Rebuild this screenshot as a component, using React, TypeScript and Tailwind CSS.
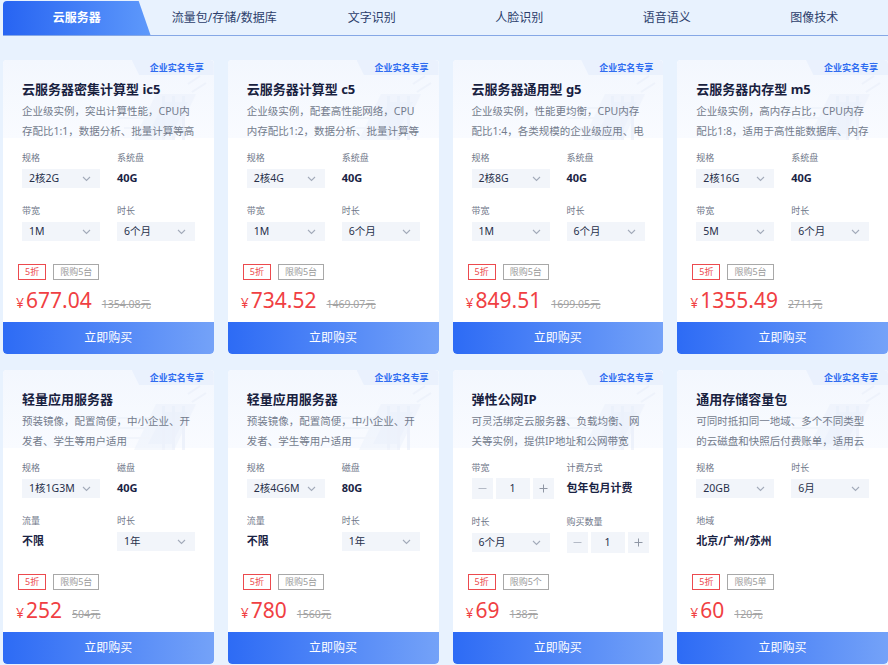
type Field =
  | { label: string; kind: 'select'; value: string }
  | { label: string; kind: 'text'; value: string }
  | { label: string; kind: 'stepper'; value: string };

type Card = {
  title: string;
  desc: string;
  fields: Field[];
  limit: string;
  price: string;
  orig: string;
};

const tabs = ['云服务器', '流量包/存储/数据库', '文字识别', '人脸识别', '语音语义', '图像技术'];

const cvmFields = (spec: string, bw: string): Field[] => [
  { label: '规格', kind: 'select', value: spec },
  { label: '系统盘', kind: 'text', value: '40G' },
  { label: '带宽', kind: 'select', value: bw },
  { label: '时长', kind: 'select', value: '6个月' },
];

// descriptions are cut to what fits in two lines
const cards: Card[] = [
  {
    title: '云服务器密集计算型 ic5',
    desc: '企业级实例，突出计算性能，CPU内存配比1:1，数据分析、批量计算等高',
    fields: cvmFields('2核2G', '1M'),
    limit: '限购5台',
    price: '677.04',
    orig: '1354.08元',
  },
  {
    title: '云服务器计算型 c5',
    desc: '企业级实例，配套高性能网络，CPU内存配比1:2，数据分析、批量计算等',
    fields: cvmFields('2核4G', '1M'),
    limit: '限购5台',
    price: '734.52',
    orig: '1469.07元',
  },
  {
    title: '云服务器通用型 g5',
    desc: '企业级实例，性能更均衡，CPU内存配比1:4，各类规模的企业级应用、电',
    fields: cvmFields('2核8G', '1M'),
    limit: '限购5台',
    price: '849.51',
    orig: '1699.05元',
  },
  {
    title: '云服务器内存型 m5',
    desc: '企业级实例，高内存占比，CPU内存配比1:8，适用于高性能数据库、内存',
    fields: cvmFields('2核16G', '5M'),
    limit: '限购5台',
    price: '1355.49',
    orig: '2711元',
  },
  {
    title: '轻量应用服务器',
    desc: '预装镜像，配置简便，中小企业、开发者、学生等用户适用',
    fields: [
      { label: '规格', kind: 'select', value: '1核1G3M' },
      { label: '磁盘', kind: 'text', value: '40G' },
      { label: '流量', kind: 'text', value: '不限' },
      { label: '时长', kind: 'select', value: '1年' },
    ],
    limit: '限购5台',
    price: '252',
    orig: '504元',
  },
  {
    title: '轻量应用服务器',
    desc: '预装镜像，配置简便，中小企业、开发者、学生等用户适用',
    fields: [
      { label: '规格', kind: 'select', value: '2核4G6M' },
      { label: '磁盘', kind: 'text', value: '80G' },
      { label: '流量', kind: 'text', value: '不限' },
      { label: '时长', kind: 'select', value: '1年' },
    ],
    limit: '限购5台',
    price: '780',
    orig: '1560元',
  },
  {
    title: '弹性公网IP',
    desc: '可灵活绑定云服务器、负载均衡、网关等实例，提供IP地址和公网带宽',
    fields: [
      { label: '带宽', kind: 'stepper', value: '1' },
      { label: '计费方式', kind: 'text', value: '包年包月计费' },
      { label: '时长', kind: 'select', value: '6个月' },
      { label: '购买数量', kind: 'stepper', value: '1' },
    ],
    limit: '限购5个',
    price: '69',
    orig: '138元',
  },
  {
    title: '通用存储容量包',
    desc: '可同时抵扣同一地域、多个不同类型的云磁盘和快照后付费账单，适用云',
    fields: [
      { label: '规格', kind: 'select', value: '20GB' },
      { label: '时长', kind: 'select', value: '6月' },
      { label: '地域', kind: 'text', value: '北京/广州/苏州' },
    ],
    limit: '限购5单',
    price: '60',
    orig: '120元',
  },
];

function Chevron() {
  return (
    <svg width="9" height="6" viewBox="0 0 9 6" fill="none">
      <path d="M1 1l3.5 3.5L8 1" stroke="#a3abba" strokeWidth="1.1" />
    </svg>
  );
}

function Stepper({ value }: { value: string }) {
  return (
    <div className="mt-[4px] flex h-[21px] gap-[3px]">
      <div className="flex w-[21px] items-center justify-center bg-[#f2f5fa]">
        <svg width="9" height="9" viewBox="0 0 9 9">
          <path d="M0.5 4.5h8" stroke="#b4bac6" strokeWidth="1" />
        </svg>
      </div>
      <div className="flex w-[34px] items-center justify-center bg-[#f2f5fa] text-[10.5px] text-[#27304a]">
        {value}
      </div>
      <div className="flex w-[21px] items-center justify-center bg-[#f2f5fa]">
        <svg width="9" height="9" viewBox="0 0 9 9">
          <path d="M0.5 4.5h8M4.5 0.5v8" stroke="#8f96a4" strokeWidth="1" />
        </svg>
      </div>
    </div>
  );
}

function FieldBox({ f }: { f: Field }) {
  return (
    <div>
      <div className="h-[13px] text-[9px] leading-[13px] text-[#6f7789]">{f.label}</div>
      {f.kind === 'select' && (
        <div className="mt-[5px] flex h-[19px] w-[78px] items-center justify-between bg-[#f2f5fa] pl-[7px] pr-[9px] text-[10.5px] text-[#27304a]">
          <span>{f.value}</span>
          <Chevron />
        </div>
      )}
      {f.kind === 'text' && (
        <div className="mt-[5px] flex h-[19px] items-center text-[11px] font-bold text-[#1a2344]">{f.value}</div>
      )}
      {f.kind === 'stepper' && <Stepper value={f.value} />}
    </div>
  );
}

function Decoration() {
  return (
    <svg
      className="pointer-events-none absolute right-[6px] top-[14px] opacity-40"
      width="104"
      height="66"
      viewBox="0 0 104 66"
      fill="none"
    >
      <path d="M30 66L52 20h40L70 66z" fill="#e8effb" />
      <path d="M44 60l16-32h24L68 60z" fill="#dfe8f9" />
      <path d="M58 22h3v44h-3zM68 22h3v44h-3zM78 22h3v44h-3z" fill="#dde6f7" />
      <path d="M8 34h40M14 44h34M20 54h26" stroke="#e8eef9" strokeWidth="2" />
      <path d="M84 10l12-8M88 18l14-9" stroke="#e4ebf8" strokeWidth="2" />
    </svg>
  );
}

function ProductCard({ c }: { c: Card }) {
  return (
    <div className="relative flex h-[294px] flex-col overflow-hidden rounded-[4px] bg-white">
      <div className="relative h-[78px] bg-[linear-gradient(180deg,#f3f7fe_0%,#f9fbff_100%)] px-[19px] pt-[20px]">
        <Decoration />
        <div className="absolute right-0 top-0 h-[15px] w-[82px] rounded-tr-[4px] bg-[#eaf1fd] pr-[10px] text-right text-[9px] font-bold leading-[15px] text-[#2f6cf1] [clip-path:polygon(0_0,100%_0,100%_100%,9%_100%)]">
          企业实名专享
        </div>
        <h3 className="relative text-[13px] font-bold leading-[18px] text-[#18213f]">{c.title}</h3>
        <p className="relative mt-[4px] w-[175px] text-[10.5px] leading-[19.5px] text-[#737b8c]">{c.desc}</p>
      </div>
      <div className="grid grid-cols-[95px_1fr] gap-y-[16px] px-[19px] pt-[13px]">
        {c.fields.map((f, i) => (
          <FieldBox key={i} f={f} />
        ))}
      </div>
      <div className="mt-auto">
        <div className="flex gap-[7px] px-[15px]">
          <span className="flex h-[16px] items-center border border-[#ec4a4e] px-[6px] text-[9px] text-[#ec4a4e]">5折</span>
          <span className="flex h-[16px] items-center border border-[#a8a8a8] px-[6px] text-[9px] text-[#9a9a9a]">
            {c.limit}
          </span>
        </div>
        <div className="mb-[9px] mt-[7px] flex h-[26px] items-baseline px-[13px] text-[#f03f43]">
          <span className="text-[14px]">¥</span>
          <span className="ml-[2px] text-[21px] leading-[26px]">{c.price}</span>
          <span className="ml-[10px] text-[10.5px] text-[#a3a3a3] line-through">{c.orig}</span>
        </div>
        <button className="flex h-[32px] w-full items-center justify-center rounded-b-[4px] bg-[linear-gradient(90deg,#2d6bf5_0%,#74a2f8_100%)] text-[12px] text-white">
          立即购买
        </button>
      </div>
    </div>
  );
}

export default function App() {
  return (
    <div className="h-[665px] w-[888px] overflow-hidden bg-[#e8f2fe] font-['Noto_Sans','Noto_Sans_CJK_SC',sans-serif]">
      <div className="ml-[3px] flex h-[36px] w-[885px] border-b border-[#86a8e6]">
        {tabs.map((t, i) =>
          i === 0 ? (
            <div
              key={t}
              className="mt-[1px] flex flex-1 items-center justify-center rounded-tl-[4px] bg-[linear-gradient(90deg,#2764f2_0%,#5e99fb_100%)] text-[12px] font-bold text-white [clip-path:polygon(0_0,92%_0,100%_100%,0_100%)]"
            >
              <span className="-mt-[1px]">{t}</span>
            </div>
          ) : (
            <div key={t} className="flex flex-1 items-center justify-center text-[12px] text-[#2c3e6b]">
              {t}
            </div>
          ),
        )}
      </div>
      <div className="ml-[3px] mt-[24px] grid w-[885px] grid-cols-4 gap-x-[14px] gap-y-[16px]">
        {cards.map((c, i) => (
          <ProductCard key={i} c={c} />
        ))}
      </div>
    </div>
  );
}
